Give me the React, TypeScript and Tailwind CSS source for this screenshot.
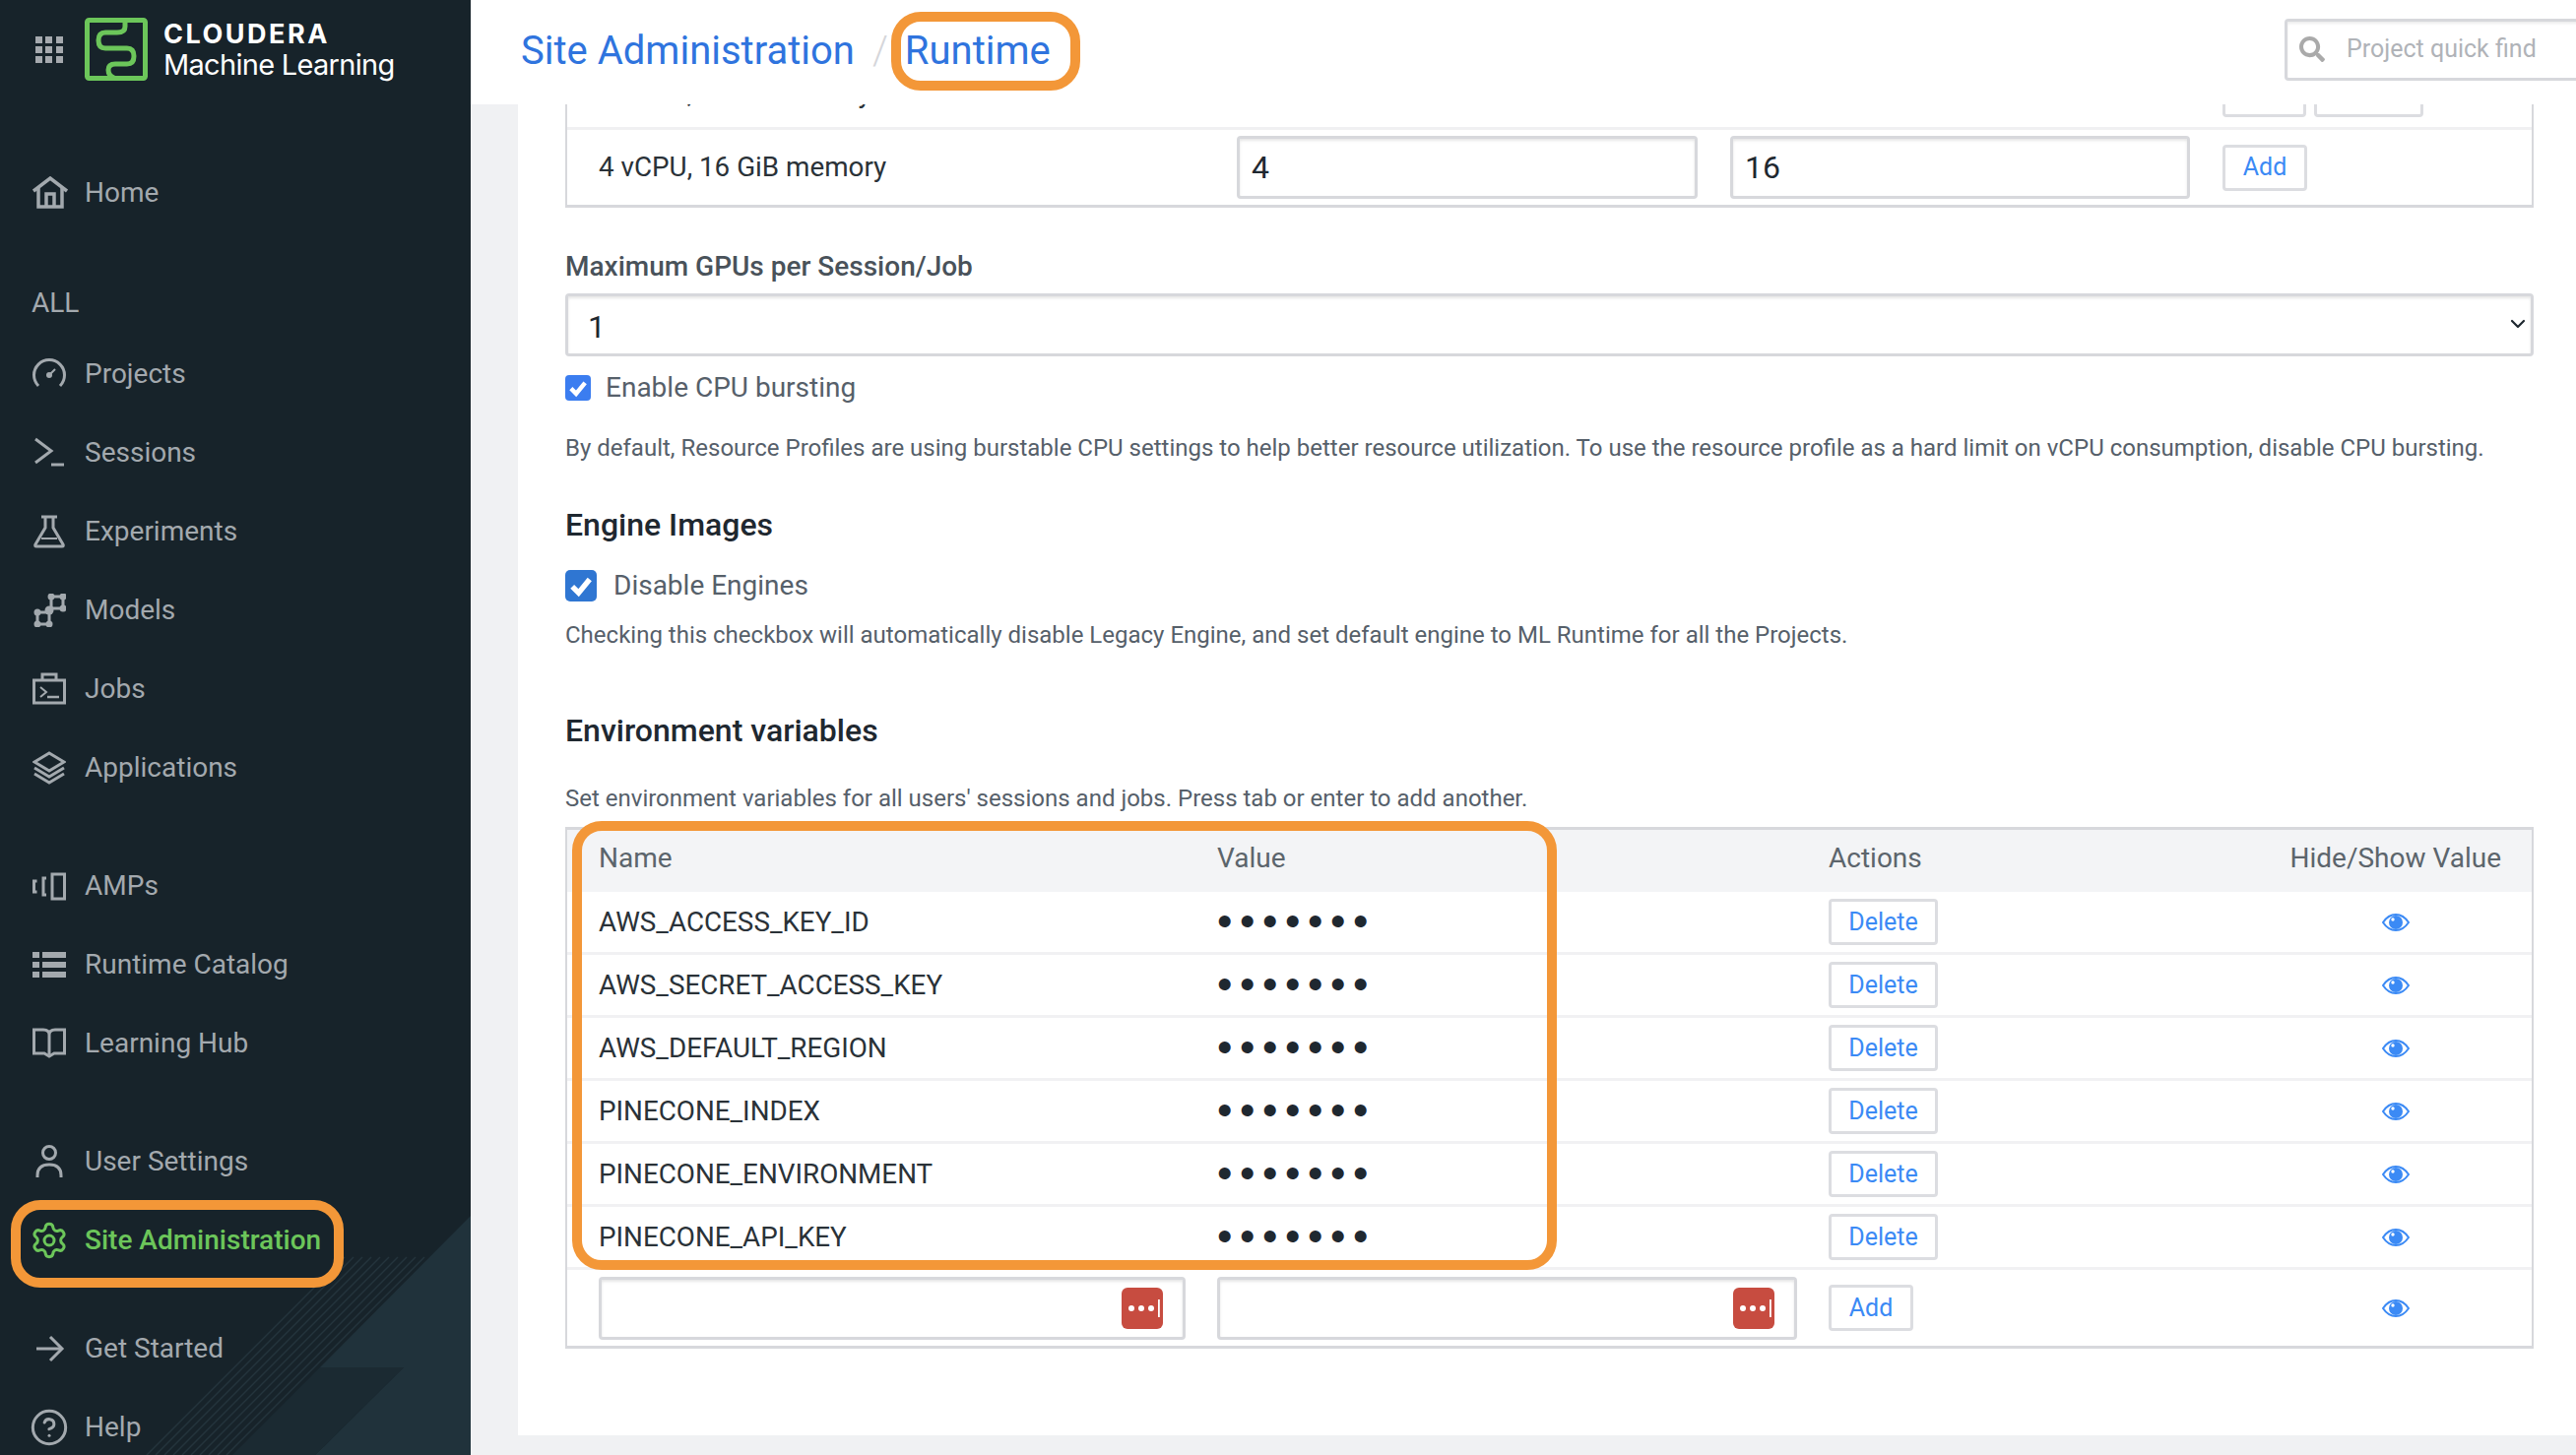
import React from "react";
import { ChevronDown, CircleHelp, Settings } from "lucide-react";
import { FaSearch } from "react-icons/fa";

const iconProps = {
  width: 34,
  height: 34,
  viewBox: "0 0 34 34",
  fill: "none",
  stroke: "currentColor",
  strokeWidth: 3,
};

const HomeIcon = () => (
  <svg {...iconProps} width={36} viewBox="0 0 36 34">
    <path d="M1 15 L18 2 L35 15" strokeWidth={3.5} />
    <path d="M6 12 V31 H30 V12" strokeWidth={3.5} />
    <path d="M14 31 V18 H22 V31" strokeWidth={3.5} />
  </svg>
);
const GaugeIcon = () => (
  <svg {...iconProps}>
    <path d="M6 29 A15.5 15.5 0 1 1 28 29" />
    <circle cx="17" cy="18" r="3" fill="currentColor" stroke="none" />
    <path d="M17 18 L23 12" strokeWidth={2} />
  </svg>
);
const TerminalIcon = () => (
  <svg {...iconProps}>
    <path d="M3 3 L19 15 L3 27" />
    <path d="M19 29 H32" />
  </svg>
);
const FlaskIcon = () => (
  <svg {...iconProps}>
    <path d="M9 2 H25" />
    <path d="M13 2 V13 L3 30 Q2 32 4 32 H30 Q32 32 31 30 L21 13 V2" />
    <path d="M9 24 H25" strokeWidth={2} />
  </svg>
);
const ModelsIcon = () => (
  <svg {...iconProps}>
    <path d="M5 19 H17 V31 H5 Z" />
    <path d="M19 3 H31 V15 H19 Z" />
    <path d="M14 20 L21 14" />
    <g fill="currentColor" stroke="none">
      <circle cx="5" cy="19" r="3.5" />
      <circle cx="5" cy="31" r="3.5" />
      <circle cx="17" cy="31" r="3.5" />
      <circle cx="17" cy="17" r="4.5" />
      <circle cx="19" cy="3" r="3.5" />
      <circle cx="31" cy="3" r="3.5" />
      <circle cx="31" cy="15" r="3.5" />
    </g>
  </svg>
);
const JobsIcon = () => (
  <svg {...iconProps}>
    <path d="M1.5 8 H32.5 V31 H1.5 Z" />
    <path d="M10 8 V2 H24 V8" />
    <path d="M8 15 L14 20 L8 25" strokeWidth={2} />
    <path d="M15 25 H27" strokeWidth={2.5} />
  </svg>
);
const LayersIcon = () => (
  <svg {...iconProps}>
    <path d="M17 2 L32 11 L17 20 L2 11 Z" />
    <path d="M2 17 L17 26 L32 17" />
    <path d="M2 23 L17 32 L32 23" />
  </svg>
);
const AmpsIcon = () => (
  <svg {...iconProps}>
    <path d="M20 5 H32.5 V30 H20 Z" />
    <path d="M14 9 H11 V26 H14" />
    <path d="M4.5 12 H1.5 V23 H4.5" />
  </svg>
);
const ListIcon = () => (
  <svg {...iconProps} fill="currentColor" stroke="none">
    <rect x="0" y="4" width="7" height="6" />
    <rect x="10" y="4" width="24" height="6" />
    <rect x="0" y="14" width="7" height="6" />
    <rect x="10" y="14" width="24" height="6" />
    <rect x="0" y="24" width="7" height="6" />
    <rect x="10" y="24" width="24" height="6" />
  </svg>
);
const BookIcon = () => (
  <svg {...iconProps}>
    <path d="M1.5 3 H11 Q17 3 17 8 Q17 3 23 3 H32.5 V27 H22 L17 30 L12 27 H1.5 Z" />
    <path d="M17 8 V28" />
  </svg>
);
const UserIcon = () => (
  <svg {...iconProps}>
    <circle cx="17" cy="8" r="6.5" />
    <path d="M5 33 V31 Q5 20 17 20 Q29 20 29 31 V33" />
  </svg>
);
const ArrowIcon = () => (
  <svg {...iconProps}>
    <path d="M4 17 H30" />
    <path d="M18 5 L30 17 L18 29" />
  </svg>
);

const GridIcon = () => (
  <div className="grid grid-cols-3 gap-[3px] w-[28px] shrink-0">
    {Array.from({ length: 9 }).map((_, i) => (
      <div key={i} className="w-[7px] h-[7px] bg-[#a5a9ae]" />
    ))}
  </div>
);

const Logo = () => (
  <svg width="64" height="64" viewBox="0 0 64 64" fill="none" stroke="#6cc65a" className="shrink-0">
    <rect x="2.5" y="2.5" width="59" height="59" rx="2" strokeWidth={5} />
    <path
      d="M41 3 V9 Q41 15 33 15 H21 Q14 15 14 23 Q14 31 21 31 H43 Q50 31 50 39 Q50 47 43 47 H31 Q24 47 24 53 Q24 59 30 61"
      strokeWidth={5}
    />
  </svg>
);

const NavItem = ({
  icon,
  label,
  active,
  className,
}: {
  icon: React.ReactNode;
  label: string;
  active?: boolean;
  className?: string;
}) => (
  <div
    className={`relative flex items-center h-[80px] pl-[33px] ${
      active ? "text-[#6cc65a] font-medium" : "text-[#a3a9ae]"
    } ${className ?? ""}`}
  >
    <span className="w-[53px] flex justify-start">{icon}</span>
    <span className="text-[28px]">{label}</span>
  </div>
);

const SidebarPattern = () => (
  <svg
    className="absolute left-0 bottom-0"
    width="478"
    height="243"
    viewBox="0 1235 478 243"
    fill="none"
  >
    <path d="M478 1235 L325 1389 H410 L320 1478 H478 Z" fill="#20323b" />
    <path d="M325 1389 H410 L320 1478 H236 Z" fill="#1b2a32" />
    {Array.from({ length: 10 }).map((_, i) => (
      <path
        key={i}
        d={`M${350 + i * 9} 1277 L${149 + i * 9} 1478`}
        stroke="#24343c"
        strokeWidth={1.5}
      />
    ))}
  </svg>
);

const Sidebar = () => (
  <aside className="relative w-[478px] shrink-0 h-full bg-[#17232a] overflow-hidden">
    <SidebarPattern />
    <div className="relative flex items-center h-[100px] pl-[36px]">
      <GridIcon />
      <div className="ml-[22px]">
        <Logo />
      </div>
      <div className="ml-[16px] text-white">
        <div className="font-['Inter',sans-serif] font-bold text-[27px] leading-[30px] tracking-[2.5px] mt-[3px]">CLOUDERA</div>
        <div className="text-[29px] leading-[36px] font-['Inter',sans-serif] tracking-[-0.7px] -mt-[2px]">Machine Learning</div>
      </div>
    </div>
    <div className="relative">
      <NavItem className="mt-[56px]" icon={<HomeIcon />} label="Home" />
      <div className="mt-[52px] pl-[32px] h-[40px] flex items-center text-[28px] text-[#a3a9ae]">ALL</div>
      <NavItem className="mt-[12px]" icon={<GaugeIcon />} label="Projects" />
      <NavItem icon={<TerminalIcon />} label="Sessions" />
      <NavItem icon={<FlaskIcon />} label="Experiments" />
      <NavItem icon={<ModelsIcon />} label="Models" />
      <NavItem icon={<JobsIcon />} label="Jobs" />
      <NavItem icon={<LayersIcon />} label="Applications" />
      <NavItem className="mt-[40px]" icon={<AmpsIcon />} label="AMPs" />
      <NavItem icon={<ListIcon />} label="Runtime Catalog" />
      <NavItem icon={<BookIcon />} label="Learning Hub" />
      <NavItem className="mt-[40px]" icon={<UserIcon />} label="User Settings" />
      <NavItem active icon={<Settings size={40} strokeWidth={1.8} className="-m-[3px]" />} label="Site Administration" />
      <NavItem className="mt-[30px]" icon={<ArrowIcon />} label="Get Started" />
      <NavItem icon={<CircleHelp size={40} strokeWidth={1.8} className="-m-[3px]" />} label="Help" />
    </div>
  </aside>
);

const Header = () => (
  <header className="relative z-10 h-[106px] shrink-0 bg-white flex items-center pl-[51px] overflow-hidden">
    <div className="flex items-center -mt-[3px]">
      <span className="text-[40px] text-[#2f74de]">Site Administration</span>
      <span className="text-[40px] text-[#d5d6da] ml-[18px] mr-[8px] font-light">/</span>
      <span className="text-[40px] text-[#2f74de] ml-[9px]">Runtime</span>
    </div>
    <div className="ml-auto -mr-[24px] mb-[6px] w-[320px] h-[63px] border-[3px] border-[#d7d8dc] rounded-[4px] flex items-center pl-[12px] shadow-[inset_0_2px_3px_rgba(0,0,0,0.08)]">
      <FaSearch className="text-[#aaaaaa] w-[26px] h-[26px] shrink-0" />
      <span className="ml-[22px] text-[25px] text-[#b0b3b8]">Project quick find</span>
    </div>
  </header>
);

const OutlineButton = ({ label, className }: { label: string; className: string }) => (
  <button className={`h-[47px] rounded-[4px] border-[3px] border-[#dcdde1] bg-white text-[25px] text-[#3b8af5] ${className}`}>
    {label}
  </button>
);

const TextBox = ({ value, className }: { value?: string; className: string }) => (
  <input
    readOnly
    defaultValue={value}
    className={`h-[64px] rounded-[4px] border-[3px] border-[#d7d8dc] px-[12px] text-[32px] text-[#1f2830] shadow-[inset_0_2px_3px_rgba(0,0,0,0.1)] outline-none ${className}`}
  />
);

const ProfileTable = () => (
  <div className="border-x-2 border-b-[3px] border-[#d7d8dc]">
    <div className="h-[23px] overflow-hidden grid grid-cols-[680px_501px_500px_1fr]">
      <div className="pl-[32px] -mt-[32px] text-[27.8px] leading-[42px] text-[#2a3238]">2 vCPU, 8 GiB memory</div>
      <div />
      <div />
      <div className="flex gap-[8px] -mt-[34px]">
        <OutlineButton label="" className="w-[85px]" />
        <OutlineButton label="" className="w-[111px]" />
      </div>
    </div>
    <div className="h-[79px] border-t-[3px] border-[#f0f0f2] grid grid-cols-[680px_501px_500px_1fr] items-center">
      <div className="pl-[32px] text-[27.8px] text-[#2a3238]">4 vCPU, 16 GiB memory</div>
      <TextBox value="4" className="w-[468px]" />
      <TextBox value="16" className="w-[467px]" />
      <OutlineButton label="Add" className="w-[86px]" />
    </div>
  </div>
);

const EyeIcon = () => (
  <svg width="28" height="18" viewBox="0 0 28 18" className="mx-auto">
    <path
      d="M1 9 C5 3 9 1 14 1 C19 1 23 3 27 9 C23 15 19 17 14 17 C9 17 5 15 1 9 Z"
      fill="none"
      stroke="#3b8af5"
      strokeWidth={2}
    />
    <circle cx="14" cy="9" r="7" fill="#3b8af5" />
    <circle cx="11" cy="6" r="1.7" fill="#ffffff" />
  </svg>
);

const PasswordBadge = () => (
  <svg
    width="42"
    height="42"
    viewBox="0 0 42 42"
    className="absolute right-[23px] top-[11px]"
  >
    <rect width="42" height="42" rx="6" fill="#c74c40" />
    <g fill="#ffffff">
      <circle cx="10" cy="21" r="3" />
      <circle cx="20" cy="21" r="3" />
      <circle cx="30" cy="21" r="3" />
      <rect x="37" y="12" width="1.8" height="18" />
    </g>
  </svg>
);

const envVars = [
  "AWS_ACCESS_KEY_ID",
  "AWS_SECRET_ACCESS_KEY",
  "AWS_DEFAULT_REGION",
  "PINECONE_INDEX",
  "PINECONE_ENVIRONMENT",
  "PINECONE_API_KEY",
];

const envGrid = "grid grid-cols-[628px_621px_470px_1fr] items-center";

const EnvTable = () => (
  <div className="mt-[10px] border-t-[3px] border-b-[3px] border-x-2 border-[#d7d8dc]">
    <div className={`${envGrid} h-[63px] pb-[5px] bg-[#f3f4f6] text-[28px] text-[#5c656c]`}>
      <div className="pl-[32px]">Name</div>
      <div className="pl-[32px]">Value</div>
      <div className="pl-[32px]">Actions</div>
      <div className="pr-[31px] text-right">Hide/Show Value</div>
    </div>
    {envVars.map((name) => (
      <div key={name} className={`${envGrid} h-[64px] border-b-[3px] border-[#f1f1f3] text-[27.8px] text-[#2a3238]`}>
        <div className="pl-[32px]">{name}</div>
        <div className="pl-[32px] -mt-[2px] text-[#1f2830] font-['Liberation_Sans',sans-serif] text-[44px] leading-[40px] tracking-[7.6px]">•••••••</div>
        <div className="pl-[32px]">
          <OutlineButton label="Delete" className="w-[111px] block" />
        </div>
        <EyeIcon />
      </div>
    ))}
    <div className={`${envGrid} h-[77px]`}>
      <div className="pl-[32px] relative">
        <TextBox className="w-[596px] block" />
        <PasswordBadge />
      </div>
      <div className="pl-[32px] relative">
        <TextBox className="w-[589px] block" />
        <PasswordBadge />
      </div>
      <div className="pl-[32px]">
        <OutlineButton label="Add" className="w-[86px] block" />
      </div>
      <EyeIcon />
    </div>
  </div>
);

const Check = () => (
  <svg viewBox="0 0 20 20" className="w-full h-full" fill="none" stroke="#ffffff" strokeWidth={3.4}>
    <path d="M4.5 10.5 L8.5 14.5 L15.5 6" />
  </svg>
);

const Content = () => (
  <div className="flex-1 min-h-0 bg-[#f0f1f3] pl-[48px] pb-[20px] flex">
    <div className="flex-1 min-w-0 bg-white pl-[48px] pr-[43px] overflow-hidden">
      <ProfileTable />

      <div className="mt-[39px] text-[28px] leading-[42px] font-medium text-[#49525a]">Maximum GPUs per Session/Job</div>
      <div className="relative mt-[6px]">
        <select className="block w-full h-[64px] appearance-none rounded-[4px] border-[3px] border-[#d7d8dc] bg-white pl-[20px] pt-[3px] text-[32px] text-[#1f2830] shadow-[inset_0_2px_3px_rgba(0,0,0,0.1)] outline-none">
          <option>1</option>
        </select>
        <ChevronDown size={24} strokeWidth={2.2} className="absolute right-[4px] top-[19px] text-[#1f2830]" />
      </div>

      <div className="mt-[11px] flex items-center h-[42px]">
        <div className="w-[26px] h-[26px] rounded-[4px] bg-[#3b7df0]"><Check /></div>
        <span className="ml-[15px] text-[28px] text-[#56606a]">Enable CPU bursting</span>
      </div>
      <p className="mt-[21px] text-[24px] leading-[38px] text-[#56606a] whitespace-nowrap">
        By default, Resource Profiles are using burstable CPU settings to help better resource utilization. To use the resource profile as a hard limit on vCPU consumption, disable CPU bursting.
      </p>

      <h2 className="mt-[36px] text-[32px] leading-[46px] font-medium text-[#1f2830]">Engine Images</h2>
      <div className="mt-[18px] flex items-center h-[42px]">
        <div className="w-[32px] h-[32px] rounded-[5px] bg-[#2f76d2]"><Check /></div>
        <span className="ml-[17px] text-[28px] text-[#56606a]">Disable Engines</span>
      </div>
      <p className="mt-[10px] text-[24px] leading-[38px] text-[#56606a]">
        Checking this checkbox will automatically disable Legacy Engine, and set default engine to ML Runtime for all the Projects.
      </p>

      <h2 className="mt-[55px] text-[32px] leading-[46px] font-medium text-[#1f2830]">Environment variables</h2>
      <p className="mt-[27px] text-[24px] leading-[38px] text-[#56606a]">
        Set environment variables for all users' sessions and jobs. Press tab or enter to add another.
      </p>

      <EnvTable />
    </div>
  </div>
);

export default function App() {
  return (
    <div className="relative flex w-[2616px] h-[1478px] overflow-hidden bg-white font-['Roboto',sans-serif]">
      <Sidebar />
      <main className="flex-1 min-w-0 flex flex-col">
        <Header />
        <Content />
      </main>
      {/* Orange call-outs drawn over the screenshot */}
      <div className="absolute z-20 pointer-events-none left-[11px] top-[1219px] w-[338px] h-[89px] border-[10px] border-[#f39738] rounded-[30px]" />
      <div className="absolute z-20 pointer-events-none left-[905px] top-[12px] w-[192px] h-[80px] border-[10px] border-[#f39738] rounded-[30px]" />
      <div className="absolute z-20 pointer-events-none left-[581px] top-[834px] w-[1000px] h-[456px] border-[10px] border-[#f39738] rounded-[30px]" />
    </div>
  );
}
